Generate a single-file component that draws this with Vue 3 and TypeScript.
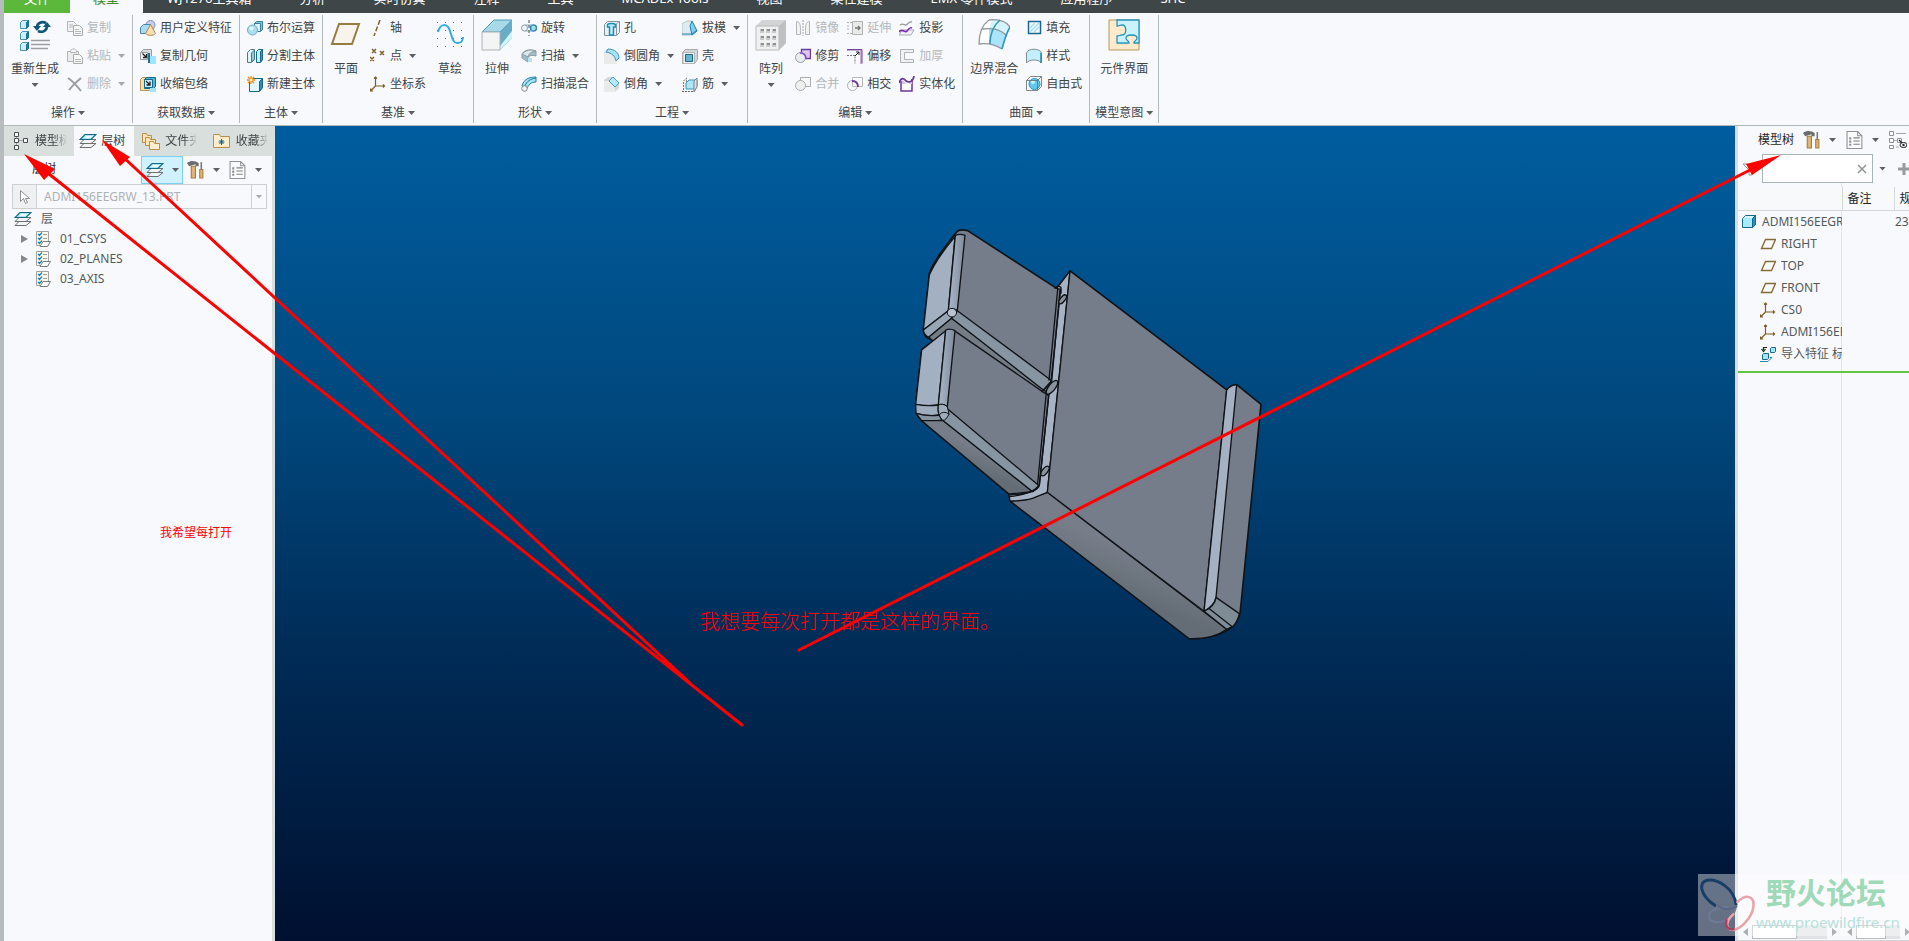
<script setup lang="ts">
interface Tool { icon: string; label: string; menu?: boolean; off?: boolean; big?: boolean }
interface Group { title: string; parts: Tool[][] }

const menuTabs: string[] = ['WJ1276工具箱', '分析', '实时仿真', '注释', '工具', 'MCADEx Tools', '视图', '柔性建模', 'EMX 零件模式', '应用程序', 'SHC']

const groups: Group[] = [
  { title: '操作', parts: [
    [{ icon: 'regen', label: '重新生成', menu: true, big: true }],
    [{ icon: 'copy', label: '复制', off: true }, { icon: 'paste', label: '粘贴', menu: true, off: true }, { icon: 'remove', label: '删除', menu: true, off: true }],
  ] },
  { title: '获取数据', parts: [
    [{ icon: 'udf', label: '用户定义特征' }, { icon: 'copyGeom', label: '复制几何' }, { icon: 'shrink', label: '收缩包络' }],
  ] },
  { title: '主体', parts: [
    [{ icon: 'bool', label: '布尔运算' }, { icon: 'split', label: '分割主体' }, { icon: 'newBody', label: '新建主体' }],
  ] },
  { title: '基准', parts: [
    [{ icon: 'planeBig', label: '平面', big: true }],
    [{ icon: 'axis', label: '轴' }, { icon: 'point', label: '点', menu: true }, { icon: 'csys', label: '坐标系' }],
    [{ icon: 'sketch', label: '草绘', big: true }],
  ] },
  { title: '形状', parts: [
    [{ icon: 'extrude', label: '拉伸', big: true }],
    [{ icon: 'revolve', label: '旋转' }, { icon: 'sweep', label: '扫描', menu: true }, { icon: 'blend', label: '扫描混合' }],
  ] },
  { title: '工程', parts: [
    [{ icon: 'hole', label: '孔' }, { icon: 'round', label: '倒圆角', menu: true }, { icon: 'chamfer', label: '倒角', menu: true }],
    [{ icon: 'draft', label: '拔模', menu: true }, { icon: 'shell', label: '壳' }, { icon: 'rib', label: '筋', menu: true }],
  ] },
  { title: '编辑', parts: [
    [{ icon: 'pattern', label: '阵列', menu: true, big: true }],
    [{ icon: 'mirror', label: '镜像', off: true }, { icon: 'trim', label: '修剪' }, { icon: 'merge', label: '合并', off: true }],
    [{ icon: 'extend', label: '延伸', off: true }, { icon: 'offset', label: '偏移' }, { icon: 'intersect', label: '相交' }],
    [{ icon: 'project', label: '投影' }, { icon: 'thicken', label: '加厚', off: true }, { icon: 'solidify', label: '实体化' }],
  ] },
  { title: '曲面', parts: [
    [{ icon: 'boundary', label: '边界混合', big: true }],
    [{ icon: 'fill', label: '填充' }, { icon: 'style', label: '样式' }, { icon: 'freestyle', label: '自由式' }],
  ] },
  { title: '模型意图', parts: [
    [{ icon: 'component', label: '元件界面', big: true }],
  ] },
]

const panelTabs = [
  { icon: 'modelTree', label: '模型树', active: false },
  { icon: 'layers', label: '层树', active: true },
  { icon: 'folders', label: '文件夹', active: false },
  { icon: 'favorites', label: '收藏夹', active: false },
]

const layers = [
  { name: '01_CSYS', open: true },
  { name: '02_PLANES', open: true },
  { name: '03_AXIS', open: false },
]

const features = [
  { icon: 'part', name: 'ADMI156EEGRW_13.PRT', spec: '23', root: true },
  { icon: 'plane', name: 'RIGHT', spec: '', root: false },
  { icon: 'plane', name: 'TOP', spec: '', root: false },
  { icon: 'plane', name: 'FRONT', spec: '', root: false },
  { icon: 'csys', name: 'CS0', spec: '', root: false },
  { icon: 'csys', name: 'ADMI156EEGRW', spec: '', root: false },
  { icon: 'importFeature', name: '导入特征 标识', spec: '', root: false },
]

const cube = (x: number, y: number) =>
  `<path d="M${x} ${y + 2}l2-2h6v6l-2 2h-6z" fill="#c9f1ff" stroke="#4a93b3"/><path d="M${x + 6} ${y + 8}v-6l2-2v6z" fill="#1f7ba5" stroke="#1f6e93"/>`

const art: Record<string, string> = {
  regen: cube(1.5, 1.5) + cube(1.5, 12.5) + cube(1.5, 23.5) +
    '<path d="M12 21.5h19M12 25.5h19M12 29.5h17" stroke="#9b9fa0" stroke-width="1.6"/><path d="M18 8c0-4 5-6 9-4" fill="none" stroke="#0d5878" stroke-width="2.6"/><path d="M14 7h8l-4 5z" fill="#0d5878"/><path d="M28 7c0 5-5 7-9 5" fill="none" stroke="#0d5878" stroke-width="2.6"/><path d="M24 8h8l-4-5z" fill="#0d5878"/>',
  copy: '<path d="M.5 1.5h6l3 3v7h-9z" fill="#f1f2f2" stroke="#b4b7b8"/><path d="M6.500 5.500h6l3 3v7h-9z" fill="#f4f5f5" stroke="#a9acad"/><path d="M2 5h4M2 7h4M8 9.500h4M8 11.500h6M8 13.500h6" stroke="#b7babb"/>',
  paste: '<path d="M.5 3.500h11v10H.5z" fill="#ececec" stroke="#b4b7b8"/><path d="M3.500 4.500v-2l2-1.500h2l2 1.500v2z" fill="#f6f6f6" stroke="#b4b7b8"/><path d="M6.500 6.500h6l3 3v6h-9z" fill="#f6f7f7" stroke="#a9acad"/><path d="M8 11.500h6M8 13.500h6" stroke="#b7babb"/>',
  remove: '<path d="M1 2c5 3 9 8 13 13M14 2C9 6 5 10 2 14" fill="none" stroke="#999da0" stroke-width="2"/>',
  udf: '<circle cx="10.500" cy="5" r="4.500" fill="#c9cdf0" stroke="#8088b9"/><path d="M.5 7.500l3-3h7v6l-3 3h-7z" fill="#a9dcf0" stroke="#4388aa"/><path d="M10.500 4.500l-5 9c2 2.500 8 2.500 10 0z" fill="#f7dfae" stroke="#b08b4b"/>',
  copyGeom: '<path d="M.5 4.500l3-3h8v8l-3 3" fill="#d9dcde" stroke="#9a9ea0"/><path d="M.5 4.500h7v7h-7z" fill="#f2f3f3" stroke="#9a9ea0"/><path d="M2.500 5.500l4 4m0-3.500v3.500h-3.500" fill="none" stroke="#222" stroke-width="1.300"/><path d="M8 5h2v10H8z" fill="#1d7399"/><path d="M10 8h6v8h-6z" fill="#9ee4ff"/>',
  shrink: '<path d="M.5 3.500l2-2h9v11l-2 2h-9z" fill="#f9dea9" stroke="#b99754"/><path d="M4.500 3.500l2-2h9v9l-2 2h-9z" fill="#54b4d4" stroke="#17698d"/><path d="M4.500 3.500h8v8h-8z" fill="#c7efff" stroke="#17698d"/><path d="M6 5l4 4m0-3.500v3.500H6.500" fill="none" stroke="#222" stroke-width="1.300"/><path d="M10 12h6v4h-6z" fill="#9ee4ff"/>',
  bool: '<path d="M7.500 3.500l2-2h6v8l-2 2h-6z" fill="#79c7e1" stroke="#3e7f9c"/><path d="M7.500 3.500h6v8h-6z" fill="#d8f4ff" stroke="#3e7f9c"/><circle cx="5.500" cy="10" r="5" fill="#a9dff2" stroke="#70abc5"/><circle cx="4.500" cy="8.500" r="2" fill="#e1f7ff"/>',
  split: '<path d="M.5 4.500l3-3h4v10l-3 3h-4z" fill="#dff3f8" stroke="#457d91"/><path d="M4.500 14V5l3-3v9z" fill="#9fc7d3" stroke="#457d91"/><path d="M9.500 3.500l2-2h4v10l-2 3h-4z" fill="#c9f1ff" stroke="#17698d"/><path d="M13.500 14V3.500l2-2v10z" fill="#3e9cc0" stroke="#17698d"/>',
  newBody: '<path d="M2.500 5.500l3-3h10v9l-3 4h-10z" fill="#e2f7ff" stroke="#17698d"/><path d="M12.500 15V5.500l3-3v9z" fill="#3189ac" stroke="#17698d"/><path d="M4 0v8M0 4h8M1 1l6 6M7 1L1 7" stroke="#ef8b12" stroke-width="1.300"/><circle cx="4" cy="4" r="1.500" fill="#fff3b0"/>',
  planeBig: '<path d="M9 5h20l-7 20H2z" fill="#f8f4ed" stroke="#967c40" stroke-width="2"/>',
  axis: '<path d="M10 0L4 16" stroke="#826127" stroke-width="1.500" stroke-dasharray="5 2"/>',
  point: '<path d="M2 1l4 4m0-4L2 5M10 3l4 4m0-4l-4 4M0 9l4 4m0-4l-4 4" stroke="#826127" stroke-width="1.500"/>',
  csys: '<path d="M5.500 1v9h9M5.500 10l-5 5M4 2.500l1.500-1.500L7 2.500M13 8.500l1.500 1.500-1.500 1.500M.5 12.500v2.500h2.500" fill="none" stroke="#7d5d25" stroke-width="1.200"/>',
  sketch: '<path d="M3 3.500h28M3 11.500h28M3 19.500h28M3 27.500h28" stroke="#63676a" stroke-dasharray="1 7"/><path d="M4 13C6 5 13 3 16 12c2 6 3 13 8 12 4 0 5-4 5-6" fill="none" stroke="#35ace0" stroke-width="2"/>',
  extrude: '<path d="M1 13L13 1h18v18L19 31V13z" fill="#82c8df"/><path d="M1 13L13 1h18L19 13z" fill="#a7d9e8" stroke="#4d9ab5"/><path d="M19 13L31 1v18L19 31z" fill="#69acc7"/><path d="M19 27l12-15v7L19 31z" fill="#d0f2fc"/><path d="M1 13h18v18H1z" fill="#f3f4f4" stroke="#aeb1b3"/>',
  revolve: '<circle cx="3.500" cy="8" r="3" fill="#edf6fa" stroke="#8e9ca3"/><circle cx="12.500" cy="8" r="3" fill="#a5dff6" stroke="#2e8ab3" stroke-width="1.500"/><path d="M4 5h8M4 11h8" stroke="#86afbf"/><path d="M8 0v16" stroke="#4c4c4c" stroke-dasharray="3 2"/>',
  sweep: '<path d="M1 6c2-4 8-5 14-3v5c-4-1-7-1-8 2v4l-6-4z" fill="#9fbfca" stroke="#8b9ba2"/><path d="M1 6c4-4 9-5 14-3-5 1-7 2-8 6z" fill="#dceaf0" stroke="#8b9ba2"/><path d="M7 10h4v4H7z" fill="#b8e5f3"/>',
  blend: '<path d="M1 10C3 3 8 1 15 1v5C9 6 8 9 5 14z" fill="#a7dff1" stroke="#2681a6"/><path d="M4 10c2-5 5-7 11-8" fill="none" stroke="#177ba7"/><circle cx="3.500" cy="12.500" r="2.800" fill="#f2f3f3" stroke="#818a8f"/>',
  hole: '<path d="M.5 4.500l3-3h12v11l-3 3H.5z" fill="#eaf1f4" stroke="#81939b"/><path d="M3.500 5c0-2 8-2 8 0v2h-2v8h-4V7h-2z" fill="#b9edff" stroke="#168abc" stroke-width="1.400"/><path d="M12.500 15V4l3-3" fill="none" stroke="#8d989d"/>',
  round: '<path d="M0 4L4 1h5v7l3 3v5H0z" fill="#dcdddf"/><path d="M0 5h6c6 1 7 5 7 11H0z" fill="#e9eaea"/><path d="M4 1c7 0 11 4 11 9l-3 3C11 8 8 5 2 4z" fill="#a7e2f4" stroke="#3997bd"/>',
  chamfer: '<path d="M0 4l4-3h5l6 6v5l-4 4H0z" fill="#d4d6d8"/><path d="M0 5h7l4 4v7H0z" fill="#e9eaea"/><path d="M9 1l6 6-4 4-6-6z" fill="#b4e9f7" stroke="#419bbb"/>',
  draft: '<path d="M0 4l5-3h5l5 10-5 4H0z" fill="#dceef4" stroke="#b8c1c5"/><path d="M10 1l5 10-5 4-2-9z" fill="#86cde7" stroke="#2086b2"/><path d="M0 14h10l5-4" fill="none" stroke="#2086b2"/>',
  shell: '<path d="M.5 4.500l3-3h12v10l-3 4H.5z" fill="#d4d7d8" stroke="#a5aaac"/><path d="M1 4.500h11.500v11H1z" fill="#f0f1f1" stroke="#b3b7b9"/><path d="M3.500 6.500h7v7h-7z" fill="#65b6d3" stroke="#25647f"/>',
  rib: '<path d="M1.500 14V5l3-3v8" fill="#eef1f2" stroke="#777" stroke-dasharray="2 1"/><path d="M4 7l3-3h8v6l-3 3H4z" fill="#b2e6f6" stroke="#3a96ba"/><path d="M12 16V5l3-3v9z" fill="#d8e5ea" stroke="#77848a"/><path d="M0 15.500h12" stroke="#666" stroke-dasharray="2 1"/>',
  pattern: '<path d="M1 7l6-6h24v23l-7 7H1z" fill="#d3d4d5"/><path d="M24 7l7-6v23l-7 7z" fill="#bec0c2"/><path d="M1 7h23v24H1z" fill="#f0f0f0" stroke="#b9bbbc"/><path d="M5 10h4v4H5zM11 10h4v4h-4zM17 10h4v4h-4zM5 17h4v4H5zM11 17h4v4h-4zM17 17h4v4h-4zM5 24h4v4H5zM11 24h4v4h-4zM17 24h4v4h-4z" fill="#c9cacb"/><path d="M6 10h3v2H6zM12 10h3v2h-3zM18 10h3v2h-3zM6 17h3v2H6zM12 17h3v2h-3zM18 17h3v2h-3zM6 24h3v2H6zM12 24h3v2h-3zM18 24h3v2h-3z" fill="#8d8f91"/>',
  mirror: '<path d="M1.500 1.500c4 0 4 5 4 9v4h-4zM14.500 1.500c-4 0-4 5-4 9v4h4z" fill="#f1f2f2" stroke="#b3b6b8"/><path d="M8 0v16" stroke="#a0a3a5" stroke-dasharray="2 1"/>',
  trim: '<path d="M6.500 1.500h9v9h-5c0-3-1-5-4-5z" fill="#dbc9f4" stroke="#6d3aa2" stroke-width="1.400"/><circle cx="5.500" cy="9.500" r="5" fill="#e7e8e9" fill-opacity=".8" stroke="#999da0"/><path d="M5 5c4 0 6 2 6 6" fill="none" stroke="#8e47c8" stroke-width="1.500"/>',
  merge: '<path d="M5.500 1.500h10v9h-10z" fill="#f5f6f6" stroke="#aaadae"/><circle cx="5.500" cy="9.500" r="5" fill="#eeefef" stroke="#aaadae"/>',
  extend: '<path d="M0 2.500h5M0 13.500h5M1 5v6" stroke="#afb2b3" stroke-dasharray="2 1"/><path d="M5.500 1.500h10v13h-10z" fill="#e9eaea" stroke="#afb2b3"/><path d="M8 8h5m-2-2l2 2-2 2" fill="none" stroke="#777" stroke-width="1.400"/>',
  offset: '<path d="M0 1h15v15h-2V3H0z" fill="#c6abdf"/><path d="M0 1.500h15v14" fill="none" stroke="#73439b"/><path d="M0 7.500h8v8" fill="none" stroke="#777" stroke-dasharray="2 1"/><path d="M8 8l4-4m-3 0h3v3" fill="none" stroke="#222"/>',
  intersect: '<path d="M5.500 1.500h10v9h-10z" fill="#fbfbfb" stroke="#b7b9bc"/><circle cx="5.500" cy="9.500" r="5" fill="none" stroke="#aeb0b3"/><path d="M5 5c4 0 6 2 6 6" fill="none" stroke="#713b98" stroke-width="1.800"/>',
  project: '<path d="M1 5c3-2 4 0 6 0s2-4 6-3" fill="none" stroke="#969a9d" stroke-width="1.300"/><path d="M3 10h12l-3 5H0z" fill="#f1eff3" stroke="#aaaeb0"/><path d="M0 12c3-5 6 2 8-1s3-4 5-3" fill="none" stroke="#7b2fb4" stroke-width="1.700"/>',
  thicken: '<path d="M1.500 1.500h13v3h-9v7h9v3h-13z" fill="#f0f1f1" stroke="#afb2b3"/>',
  solidify: '<path d="M2 5v10h11V3" fill="#fff" stroke="#69379a" stroke-width="1.500"/><path d="M3 4c2 0 3 4 6 4 2 0 3-2 4-4v4H3z" fill="#d7c2ea"/><path d="M0 7c2-6 5-5 7-2 3 2 7 1 8-5" fill="none" stroke="#69379a" stroke-width="1.700"/>',
  boundary: '<path d="M11 1h11l10 7-8 22c-8-5-15-6-23-5C1 14 4 6 11 1z" fill="#fff"/><path d="M14 1c10 0 14 2 18 7l-4 8c-4-5-10-7-17-6z" fill="#d5f4ff"/><path d="M11 10c8-1 14 2 18 7l-5 13c-4-3-8-5-13-5z" fill="#abe3fa"/><path d="M11 1C4 6 1 14 1 25c8-1 15 0 23 5M4 10c9-1 17-1 25 7M11 1c8-1 16 0 21 7" fill="none" stroke="#91989d" stroke-width="1.300"/><path d="M32 8c-4 7-6 14-8 22M22 1c-6 5-10 14-10 24" fill="none" stroke="#3397bd" stroke-width="1.600"/>',
  fill: '<path d="M2.500 1.500h12v12h-12z" fill="#f7fdff" stroke="#17688f" stroke-width="1.500"/><path d="M4 12l9-9M4 8l5-5M8 12l5-5" stroke="#a2daf1" stroke-width="1.400"/>',
  style: '<path d="M.5 5c1-5 14-5 15 0v10c-2-4-13-4-15 0z" fill="#c4eefd" stroke="#818d92"/><path d="M15 5v10" stroke="#2384ad" stroke-width="1.500"/>',
  freestyle: '<circle cx="8.500" cy="8" r="5.500" fill="#63c8ec" stroke="#2c91ba"/><circle cx="7" cy="6" r="2" fill="#c7f1ff"/><path d="M.5 4.500l4-4h11v10l-4 4H.5zM.5 4.500h11v10M11.500 4.500l4-4" fill="none" stroke="#656a6d" stroke-width=".8"/>',
  component: '<path d="M1 1h30v30H1z" fill="#ffeacb" stroke="#b79656"/><path d="M9 1h22v23h-5c-1-2 3-2 3-5 0-4-11-4-11 0 0 3 4 3 3 5H9v-7c2 0 3-1 5-1 5 0 5-10 0-10-2 0-3 1-5 1z" fill="#cbf2ff" stroke="#2793bf" stroke-width="1.300"/>',
  modelTree: '<path d="M2.500.5h4v4h-4zM2.500 6.500h4v4h-4zM2.500 13.500h4v4h-4zM11.500 6.500h4v4h-4z" fill="#fff" stroke="#4a4e50"/><path d="M4.500 5v1.500M4.500 11v2M7 8.500h4" stroke="#9a9ea0"/>',
  layers: '<path d="M5 11.500h12l-5 4H1z" fill="#f3f4f4" stroke="#6a7072"/><path d="M5 7.500h12l-5 4H1z" fill="#f3f4f4" stroke="#6a7072"/><path d="M6 2.500h11l-5 5H1z" fill="#a9e4f7" stroke="#166786" stroke-width="1.200"/><path d="M7 4h7l-3 2H5z" fill="#ebfbff"/>',
  folders: '<path d="M.5 1.500h4l1 2h4v7h-9z" fill="#ffe4b4" stroke="#b88e4a"/><path d="M3.500 5.500h4l1 2h5v6h-10z" fill="#ffe4b4" stroke="#b88e4a"/><path d="M7.500 9.500h4l1 2h5v6h-10z" fill="#ffefd0" stroke="#b88e4a"/>',
  favorites: '<path d="M.5 3.500v-1h6l1 2h9v11H.5z" fill="#ffedcb" stroke="#b88e4a"/><path d="M8.500 7v6M5.500 10h6M6.500 8l4 4M10.500 8l-4 4" stroke="#11648c"/>',
  hammer: '<path d="M0 2c4-3 8-2 11 0v3H8V3L2 5z" fill="#6a6e71"/><path d="M4 5h4v11H4z" fill="#e0b576" stroke="#a37a40"/><path d="M13.500 1v7" stroke="#777b7f" stroke-width="1.500"/><path d="M12 8h3v8h-3z" fill="#e3b46c" stroke="#a97c3a"/>',
  list: '<path d="M1 .5h10l4 4v12H1z" fill="#fbfbfb" stroke="#8d9296"/><path d="M11 .5v4h4" fill="none" stroke="#8d9296"/><path d="M7 6.500h6M7 9.500h6M7 12.500h6" stroke="#7d8285"/><path d="M3 6h2v2H3zM3 9h2v2H3zM3 12h2v2H3z" fill="#8c9498"/>',
  cursor: '<path d="M3.500 1.500v11l3-3 2 5 2-1-2-4h4z" fill="#fff" stroke="#8e9293"/>',
  layer: '<path d="M1.500.5h12v14h-12z" fill="#fff8e7" stroke="#a0a3a4"/><path d="M3 3l1.500 1.500 2.500-3M3 7l1.500 1.500 2.500-3M3 11l1.500 1.500 2.500-3" fill="none" stroke="#1683b4" stroke-width="1.200"/><path d="M8 3.500h4M8 7.500h4" stroke="#9da1a3"/><path d="M8 10.500h7.500l-3 5H5z" fill="#fff" stroke="#777c7f"/>',
  part: '<path d="M1.500 4.500l3-3h10v9l-3 3h-10z" fill="#a8eaff" stroke="#17698d"/><path d="M11.500 13.500v-9l3-3v9z" fill="#318db4" stroke="#17698d"/><path d="M2.500 4l2-2H13l-2 2z" fill="#d6f6ff"/>',
  plane: '<path d="M5.500 3.500h10l-4 9H1.500z" fill="none" stroke="#866b34" stroke-width="1.400"/>',
  importFeature: '<path d="M7 1.500H3.500V4M1.500 3l2 2.500 2-2.500" fill="none" stroke="#222" stroke-width="1.200"/><path d="M10.500 2.500l1-1h4v4l-1 1h-4zM2.500 8.500l1-1h5v5l-1 1h-5z" fill="#a4e4f8" stroke="#17698d"/><path d="M0 15.500h8l4-4h-2" fill="none" stroke="#278ab1"/>',
  filter: '<path d="M1 3h14l-5 6v5H7V9z" fill="#f4f5f5" stroke="#969b9d"/>',
  treeHide: '<path d="M.5.500h4v4h-4zM.5 7.500h4v4h-4zM.5 14.500h4v3h-4zM8.500 7.500h4v4h-4z" fill="#fff" stroke="#8d9193"/><path d="M4.500 9.500h4M7 2.500h10M7 16h3" stroke="#a3a8aa"/><path d="M10 9l7 7" stroke="#222" stroke-width="1.300"/><ellipse cx="14.500" cy="14" rx="3.500" ry="2.500" fill="#fff" stroke="#222"/><circle cx="14.500" cy="14" r="1.200" fill="#222"/>',
}
</script>

<template>
  <div class="app">
    <nav class="menubar" aria-label="功能区选项卡">
      <button class="tab file">文件</button>
      <button class="tab current">模型</button>
      <button v-for="t in menuTabs" :key="t" class="tab">{{ t }}</button>
    </nav>

    <section class="ribbon">
      <div v-for="g in groups" :key="g.title" class="group">
        <div class="group-body">
          <div v-for="(part, i) in g.parts" :key="i" class="column">
            <button v-for="tool in part" :key="tool.label" :disabled="tool.off" :class="tool.big ? 'big' : 'tool'">
              <svg v-if="tool.big" class="icon32" viewBox="0 0 32 32" v-html="art[tool.icon]" />
              <svg v-else class="icon16" viewBox="0 0 16 16" v-html="art[tool.icon]" />
              <span>{{ tool.label }}</span>
              <i v-if="tool.menu" class="caret" />
            </button>
          </div>
        </div>
        <button class="group-title">{{ g.title }}<i class="caret" /></button>
      </div>
    </section>

    <main class="work">
      <aside class="left">
        <div class="panel-tabs">
          <button v-for="t in panelTabs" :key="t.label" :class="['panel-tab', { active: t.active }]">
            <svg class="icon18" viewBox="0 0 18 18" v-html="art[t.icon]" />
            <span>{{ t.label }}</span>
          </button>
        </div>
        <div class="panel-tools">
          <strong>层树</strong>
          <button class="drop lit"><svg class="icon18" viewBox="0 0 18 18" v-html="art.layers" /><i class="caret" /></button>
          <button class="drop"><svg class="icon18" viewBox="0 0 17 17" v-html="art.hammer" /><i class="caret" /></button>
          <button class="drop"><svg class="icon18" viewBox="0 0 17 17" v-html="art.list" /><i class="caret" /></button>
        </div>
        <div class="model-pick">
          <button class="pick" aria-label="选择" disabled><svg class="icon16" viewBox="0 0 16 16" v-html="art.cursor" /></button>
          <select aria-label="活动模型" disabled><option>ADMI156EEGRW_13.PRT</option></select>
          <span class="pick-arrow"><i class="caret" /></span>
        </div>
        <ul class="layers">
          <li class="layer-root"><svg class="icon18" viewBox="0 0 18 18" v-html="art.layers" /><span>层</span></li>
          <li v-for="l in layers" :key="l.name">
            <i :class="['twist', { hidden: !l.open }]" />
            <svg class="icon16" viewBox="0 0 16 16" v-html="art.layer" />
            <span>{{ l.name }}</span>
          </li>
        </ul>
      </aside>

      <section class="viewport">
        <svg class="solid" viewBox="0 0 1140 1320" role="img" aria-label="零件">
          <defs>
            <linearGradient id="side" x1="0.500" y1="0.350" x2="0.350" y2="0.600">
              <stop offset="0" stop-color="#777e8a" /><stop offset="1" stop-color="#646d75" />
            </linearGradient>
            <linearGradient id="edge" x1="0" y1="0" x2="1" y2="0">
              <stop offset="0" stop-color="#a9b7ca" /><stop offset="1" stop-color="#808b9b" />
            </linearGradient>
            <linearGradient id="bevel" x1="0" y1="1" x2="1" y2="0">
              <stop offset="0" stop-color="#8f9daa" /><stop offset="1" stop-color="#7f8c98" />
            </linearGradient>
          </defs>
          <g stroke="#101318" stroke-width="4" stroke-linejoin="round" stroke-linecap="round" fill="none">
            <path fill="#767d8a" stroke-width="5" d="M170 66Q178 56 203 62L470 235L510 183L980 540Q990 526 1010 524L1083 583L1020 1212Q1014 1232 1000 1248Q950 1288 868 1286L330 873L327 852L65 632Q48 618 47 583L65 418L100 393L78 380Q70 370 70 360L88 190Q110 140 170 66Z" />
            <path fill="#a3b0c1" d="M165 80Q110 145 88 195L70 360L145 302Z" />
            <path stroke-width="3" d="M168 72Q112 130 90 182" />
            <path fill="url(#edge)" d="M166 76Q180 70 195 76L172 302Q158 292 145 302Z" />
            <path fill="#98a5b5" d="M70 360L145 302Q155 316 155 325L86 382Q72 375 70 360Z" />
            <path fill="#747d85" d="M155 325L86 382L100 393L142 360L166 364L445 557L430 535Z" />
            <path fill="url(#bevel)" d="M172 302L455 512L430 540L155 325Z" />
            <ellipse fill="#b9c4d0" stroke-width="3" cx="156" cy="308" rx="14" ry="13" />
            <path fill="#a3b0c1" d="M65 420L137 362L115 585Q80 590 47 583Z" />
            <path fill="url(#edge)" d="M137 360Q150 354 165 362L142 590Q128 580 115 585Z" />
            <path fill="#a0adbd" d="M47 583Q82 590 115 585Q112 603 118 615Q85 620 48 610Z" />
            <path fill="#8794a1" d="M48 610Q84 620 118 615L130 630Q88 636 65 632Z" />
            <path fill="url(#side)" d="M65 632L130 632L398 845L327 852Z" />
            <path fill="url(#bevel)" d="M144 598L418 828L398 845L128 631Q120 624 118 614Z" />
            <path fill="#a0adbc" stroke-width="3" d="M115 585Q128 578 142 590L147 612Q138 632 128 631Q112 615 115 585ZM118 614Q130 600 147 612" />
            <path fill="url(#side)" d="M330 873Q390 872 410 858L442 847L980 1258Q940 1288 868 1286Z" />
            <path fill="#a7b3c3" d="M510 183L470 235L482 238L453 516L446 560L418 825Q412 852 327 855L330 873Q390 872 410 860L442 847Z" />
            <path d="M473 238L447 510M480 240L455 515M438 557L413 820M446 557L418 827Q398 852 328 860" />
            <ellipse fill="#89939d" cx="488" cy="268" rx="7" ry="16" transform="rotate(38 488 268)" />
            <ellipse fill="#89939d" cx="456" cy="532" rx="10" ry="25" transform="rotate(38 456 532)" />
            <ellipse fill="#89939d" cx="435" cy="783" rx="8" ry="17" transform="rotate(38 435 783)" />
            <path d="M425 545L455 515M418 825L398 845M465 235Q473 225 483 232V250" />
            <path fill="#767d8a" d="M510 183L980 540L912 1204L442 847Z" />
            <path fill="#a5b1c2" d="M980 540Q992 526 1010 524L948 1162Q945 1185 912 1204Z" />
            <path fill="#7f8b95" d="M948 1162L1018 1211Q1014 1232 1000 1248L980 1258L912 1204Q945 1188 948 1162Z" />
            <path d="M928 1196L995 1249" />
          </g>
        </svg>
      </section>

      <aside class="right">
        <div class="right-tools">
          <strong>模型树</strong>
          <button class="drop"><svg class="icon18" viewBox="0 0 17 17" v-html="art.hammer" /><i class="caret" /></button>
          <button class="drop"><svg class="icon18" viewBox="0 0 17 17" v-html="art.list" /><i class="caret" /></button>
          <button class="drop" aria-label="显示"><svg class="icon18" viewBox="0 0 18 18" v-html="art.treeHide" /></button>
        </div>
        <div class="find">
          <svg class="icon16" viewBox="0 0 16 16" v-html="art.filter" />
          <span class="find-box"><input type="text" aria-label="过滤"><button class="clear" aria-label="清除"><svg class="icon12" viewBox="0 0 12 12"><path d="M2 2l8 8M10 2l-8 8" stroke="#8e9496" stroke-width="1.500" /></svg></button></span>
          <i class="caret" />
          <button class="plus" aria-label="添加"><svg class="icon12" viewBox="0 0 12 12"><path d="M6 0v12M0 6h12" stroke="#969b9d" stroke-width="3" /></svg></button>
        </div>
        <div class="grid">
          <table>
            <colgroup><col class="c-name"><col class="c-note"><col class="c-spec"></colgroup>
            <thead><tr><th></th><th>备注</th><th>规格</th></tr></thead>
            <tbody>
              <tr v-for="(f, i) in features" :key="i">
                <td><div :class="['cell', { root: f.root }]"><svg class="icon16" viewBox="0 0 16 16" v-html="art[f.icon]" /><span>{{ f.name }}</span></div></td>
                <td></td>
                <td>{{ f.spec }}</td>
              </tr>
            </tbody>
          </table>
          <div class="insert-here" />
        </div>
        <div class="scrollers">
          <div class="scroller first"><i class="go back" /><i class="thumb" /><i class="go next" /></div>
          <div class="scroller"><i class="go back" /><i class="thumb" /><i class="go next" /></div>
        </div>
      </aside>
    </main>

    <p class="note small">我希望每打开</p>
    <p class="note large">我想要每次打开都是这样的界面。</p>
    <svg class="arrows" aria-hidden="true">
      <g stroke="#f00" stroke-width="3" stroke-linecap="round">
        <path d="M742 725L44 170M690 683L122 156M799 650L1756 167" />
      </g>
      <path d="M24 154L55 169L44 180ZM102 140L130 157L120 166ZM1781 155L1746 164L1752 175Z" fill="#f00" />
    </svg>

    <div class="watermark">
      <svg class="butterfly" viewBox="0 0 180 186" aria-hidden="true">
        <g fill="none" stroke-linecap="round">
          <path d="M118 92C112 40 60 12 30 16C0 20 5 62 52 94" stroke="#173e67" stroke-width="9" />
          <path d="M92 100C60 100 30 110 34 132C40 158 112 150 118 96" stroke="#6d7b98" stroke-width="6" />
          <path d="M62 94C70 106 100 110 120 98" stroke="#536384" stroke-width="5" />
          <path d="M122 84C150 56 176 66 172 98C168 134 128 172 106 170C84 168 86 142 110 122" stroke="#e9a3ab" stroke-width="8" />
          <path d="M88 140C84 162 94 170 110 168" stroke="#a54361" stroke-width="8" />
        </g>
      </svg>
      <div class="mark-text"><b>野火论坛</b><span>www.proewildfire.cn</span></div>
    </div>
  </div>
</template>

<style>
body { overflow: hidden; }
</style>

<style scoped>
.app {
  position: relative;
  box-sizing: border-box;
  display: flex;
  flex-direction: column;
  height: 100vh;
  border-left: 4px solid #b6bbbd;
  overflow: hidden;
  background: #f8f9fc;
  color: #3f4446;
  font: 12px/20px "Noto Sans", "Noto Sans CJK SC", sans-serif;
}
button { margin: 0; padding: 0; border: 0; background: none; color: inherit; font: inherit; white-space: nowrap; }
svg { flex: none; display: block; }
.icon12 { width: 12px; height: 12px; }
.icon16 { width: 16px; height: 16px; }
.icon18 { width: 18px; height: 18px; }
.icon32 { width: 32px; height: 32px; }
.caret { flex: none; width: 7px; height: 4px; background: #5b6062; clip-path: polygon(0 0, 100% 0, 50% 100%); }

.menubar { flex: none; display: flex; align-items: flex-end; height: 13px; overflow: hidden; background: #3e4647; color: #fff; font-size: 13px; }
.tab { flex: none; padding: 0 24px 5px; }
.file { padding: 0 20px 5px; background: #5cb83a; }
.current { padding: 0 24px 5px 23px; background: #f8f9fc; color: #3f8b25; }

.ribbon { flex: none; display: flex; box-sizing: border-box; height: 113px; border-bottom: 1px solid #afb8b9; }
.group { display: flex; flex-direction: column; border-right: 1px solid #b3babc; margin: 2px 0; }
.group-body { display: flex; justify-content: center; gap: 8px; height: 84px; padding: 0 7px; }
.column { display: flex; flex-direction: column; padding-bottom: 1px; }
.tool { display: flex; align-items: center; gap: 4px; height: 28px; margin-bottom: 0; }
.column:has(.tool) { margin-top: -1px; }
.tool .caret { margin-left: 3px; }
.big { display: flex; flex-direction: column; align-items: center; min-width: 32px; padding-top: 4px; }
.big span { margin-top: 8px; }
.big .caret { margin-top: 4px; }
button:disabled { color: #b3b8ba; }
button:disabled .caret { background: #a4a9ab; }
.group-title { display: flex; align-items: center; justify-content: center; gap: 3px; padding: 4px 5px 0; }

.work { flex: 1; display: flex; min-height: 0; }
.left { flex: none; box-sizing: border-box; width: 271px; border-right: 3px solid #d9dfdf; }
.panel-tabs { display: flex; height: 30px; background: #d9dfdd; margin-right: -3px; }
.panel-tab { flex: 1; display: flex; align-items: center; gap: 5px; padding-left: 8px; overflow: hidden; }
.panel-tab span { overflow: hidden; width: 32px; text-align: left; mask-image: linear-gradient(90deg, #000 60%, transparent); }
.panel-tab.active { flex: 0 0 60px; padding-left: 5px; gap: 4px; background: #f8f9fc; }
.panel-tab.active span { mask-image: none; }
.panel-tools { display: flex; align-items: stretch; height: 28px; }
.panel-tools strong { flex: 1; padding: 3px 0 0 28px; font-weight: 400; color: #24292b; }
.drop { display: flex; align-items: center; gap: 8px; padding: 0 4px; }
.panel-tools .drop { width: 42px; box-sizing: border-box; }
.panel-tools .drop:last-child { margin-right: 5px; }
.lit { border: 1px solid #7ccff7; background: #d0f1ff; }
.model-pick { display: flex; box-sizing: border-box; height: 25px; margin: 0 5px 0 8px; border: 1px solid #ccd0d1; }
.pick { display: flex; align-items: center; justify-content: center; width: 24px; border-right: 1px solid #ccd0d1; background: #eff0f2; }
.model-pick select { flex: 1; appearance: none; border: 0; padding: 0 7px; background: transparent; color: #aeb2b4; opacity: 1; font: inherit; }
.pick-arrow { display: flex; align-items: center; justify-content: center; width: 14px; border-left: 1px solid #ccd0d1; }
.pick-arrow .caret { background: #a9adaf; }
.layers { margin: 0; padding: 0; list-style: none; }
.layers li { display: flex; align-items: center; height: 20px; padding-left: 17px; color: #54595b; }
.layers .layer-root { padding-left: 10px; }
.layers span { margin-left: 9px; }
.twist { width: 0; border: 4px solid transparent; border-left: 7px solid #85898b; border-right: 0; margin-right: 7px; }
.twist.hidden { visibility: hidden; }

.viewport { position: relative; flex: 1; min-width: 0; overflow: hidden; background: linear-gradient(#005d9f, #00477c 36%, #002c57 64%, #001030); }
.solid { position: absolute; left: 625px; top: 84px; width: 380px; height: 440px; }

.right { flex: none; box-sizing: border-box; display: flex; flex-direction: column; width: 174px; border-left: 3px solid #d9dfdf; overflow: hidden; }
.right-tools { display: flex; align-items: center; height: 28px; padding-left: 20px; }
.right-tools strong { flex: none; margin-right: 5px; font-weight: 400; color: #24292b; }
.right-tools .drop { box-sizing: border-box; width: 43px; flex: none; }
.find { display: flex; align-items: center; height: 29px; padding-left: 4px; }
.find-box { display: flex; align-items: center; box-sizing: border-box; width: 111px; height: 29px; flex: none; margin: 0 6px 0 4px; border: 1px solid #a9b4b5; background: #fff; }
.find-box input { flex: 1; min-width: 0; border: 0; padding: 0 4px; outline: 0; background: transparent; font: inherit; }
.clear { margin-right: 4px; }
.plus { flex: none; margin-left: 12px; }
.grid { flex: 1; padding-top: 4px; background: linear-gradient(90deg, transparent 103px, #e2e5e7 103px, #e2e5e7 104px, transparent 104px); }
table { width: 220px; table-layout: fixed; border-collapse: collapse; }
.c-name { width: 104px; }
.c-note { width: 52px; }
th { box-sizing: border-box; height: 23px; padding: 2px 0 0 5px; border-right: 1px solid #d2d7d9; border-bottom: 1px solid #d2d7d9; background: #f8f9fa; font-weight: 400; text-align: left; line-height: 20px; color: #222; }
td { height: 22px; padding: 0 0 0 1px; overflow: hidden; line-height: 22px; color: #54595b; white-space: nowrap; }
.cell { display: flex; align-items: center; gap: 5px; padding-left: 21px; overflow: hidden; }
.cell span { min-width: 0; overflow: hidden; }
.cell.root { padding-left: 2px; }
.insert-here { height: 2px; margin-top: 6px; background: #62c544; }
.scrollers { display: flex; gap: 1px; height: 14px; padding: 0 0 1px; border-bottom: 1px solid #cfd4d5; }
.scroller { flex: none; display: flex; align-items: center; width: 72px; background: #e0e3e6; }
.scroller.first { width: 103px; }
.thumb { box-sizing: border-box; width: 30px; height: 14px; border: 1px solid #b6babc; background: #fff; }
.first .thumb { width: 45px; }
.go { display: flex; align-items: center; justify-content: center; width: 14px; height: 14px; background: #f6f7f8; }
.go.next { margin-left: auto; }
.go::before { content: ""; border: 4px solid transparent; border-right: 5px solid #777d80; border-left: 0; }
.go.next::before { border-left: 5px solid #777d80; border-right: 0; }

.note { position: absolute; margin: 0; color: #f00; white-space: nowrap; }
.small { left: 156px; top: 523px; }
.large { left: 696px; top: 610px; font-size: 20px; line-height: 24px; font-weight: 300; }
.arrows { position: absolute; left: -4px; top: 0; width: calc(100% + 4px); height: 100%; pointer-events: none; }

.watermark { position: absolute; right: 0; bottom: 5px; display: flex; width: 211px; height: 62px; background: rgba(255, 255, 255, .4); }
.butterfly { width: 58px; height: 62px; }
.mark-text { display: flex; flex-direction: column; color: #b8e0dc; font-size: 15px; }
.mark-text b { height: 38px; padding-left: 10px; color: #9edab7; font-size: 30px; line-height: 38px; }
</style>
